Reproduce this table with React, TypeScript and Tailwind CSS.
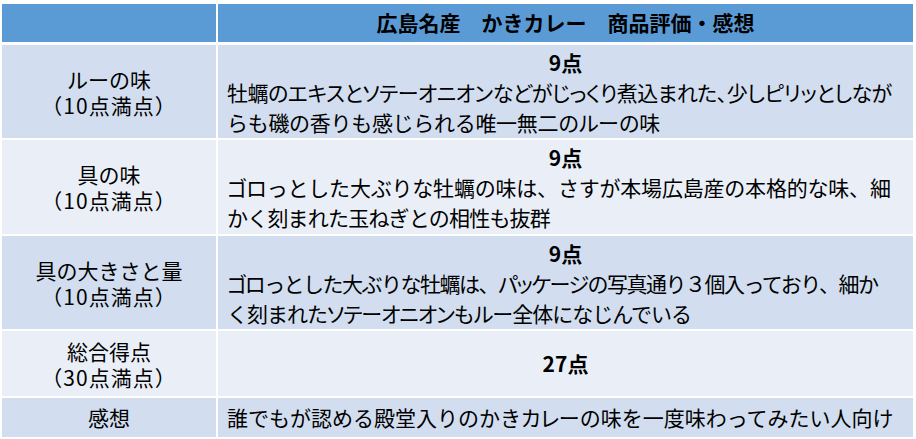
import React from "react";

type Line = { text: string; fit: string };

type Row = {
  label: string;
  score: string;
  comment: Line[];
  band: "odd" | "even";
  height: string;
};

const rows: Row[] = [
  {
    label: "ルーの味",
    score: "9点",
    comment: [
      {
        text: "牡蠣のエキスとソテーオニオンなどがじっくり煮込まれた、少しピリッとしなが",
        fit: "[font-feature-settings:'palt'] tracking-[-0.5px]",
      },
      { text: "らも磯の香りも感じられる唯一無二のルーの味", fit: "tracking-[-0.3px]" },
    ],
    band: "odd",
    height: "h-[93px]",
  },
  {
    label: "具の味",
    score: "9点",
    comment: [
      {
        text: "ゴロっとした大ぶりな牡蠣の味は、さすが本場広島産の本格的な味、細",
        fit: "tracking-[-0.2px]",
      },
      { text: "かく刻まれた玉ねぎとの相性も抜群", fit: "tracking-[-0.8px]" },
    ],
    band: "even",
    height: "h-[94px]",
  },
  {
    label: "具の大きさと量",
    score: "9点",
    comment: [
      {
        text: "ゴロっとした大ぶりな牡蠣は、パッケージの写真通り３個入っており、細か",
        fit: "tracking-[-1.5px]",
      },
      {
        text: "く刻まれたソテーオニオンもルー全体になじんでいる",
        fit: "tracking-[-1px]",
      },
    ],
    band: "odd",
    height: "h-[93px]",
  },
];

// katakana runs are set narrow, like the original slide font
const Kana = ({ text }: { text: string }) => (
  <>
    {text.split(/([\u30A0-\u30FF]+)/).map((part, i) =>
      /[\u30A0-\u30FF]/.test(part) ? (
        <span key={i} className="[font-feature-settings:'palt']">
          {part}
        </span>
      ) : (
        <React.Fragment key={i}>{part}</React.Fragment>
      )
    )}
  </>
);

const App = () => {
  return (
    <main className="w-[916px] h-[439px] bg-white pt-[4px] pl-[2px] font-['Noto_Sans_CJK_JP','Noto_Sans',sans-serif] text-black">
      <div className="w-[911px] flex flex-col gap-y-[2px]">
        {/* header */}
        <div className="grid grid-cols-[214px_695px] gap-x-[2px] h-[38px] mb-[1px]">
          <div className="bg-[#5B9BD5]"></div>
          <div className="bg-[#5B9BD5] flex items-center justify-center text-[21px] font-bold whitespace-pre">
            広島名産　かきカレー　商品評価・感想
          </div>
        </div>

        {rows.map((row, i) => (
          <div
            key={i}
            className={`grid grid-cols-[214px_695px] gap-x-[2px] ${row.height}`}
          >
            <div
              className={`${row.band === "odd" ? "bg-[#D2DEEF]" : "bg-[#EAEFF7]"} flex flex-col items-center justify-center text-[21px] leading-[26px]`}
            >
              <span>{row.label}</span>
              <span className="tracking-[1px]">（10点満点）</span>
            </div>
            <div
              className={`${row.band === "odd" ? "bg-[#D2DEEF]" : "bg-[#EAEFF7]"} flex flex-col justify-center pl-[9px] text-[21px] leading-[30px]`}
            >
              <span className="text-center font-bold pr-[9px]">{row.score}</span>
              {row.comment.map((c) => (
                <span key={c.text} className={`whitespace-nowrap ${c.fit}`}>
                  <Kana text={c.text} />
                </span>
              ))}
            </div>
          </div>
        ))}

        <div className="grid grid-cols-[214px_695px] gap-x-[2px] h-[65px]">
          <div className="bg-[#EAEFF7] flex flex-col items-center justify-center text-[21px] leading-[26px]">
            <span>総合得点</span>
            <span className="tracking-[1px]">（30点満点）</span>
          </div>
          <div className="bg-[#EAEFF7] flex items-center justify-center text-[21px] font-bold">
            27点
          </div>
        </div>

        <div className="grid grid-cols-[214px_695px] gap-x-[2px] h-[39px]">
          <div className="bg-[#D2DEEF] flex items-center justify-center text-[21px]">
            感想
          </div>
          <div className="bg-[#D2DEEF] flex items-center pl-[9px] text-[21px] whitespace-nowrap">
            <Kana text="誰でもが認める殿堂入りのかきカレーの味を一度味わってみたい人向け" />
          </div>
        </div>
      </div>
    </main>
  );
};

export default App;
